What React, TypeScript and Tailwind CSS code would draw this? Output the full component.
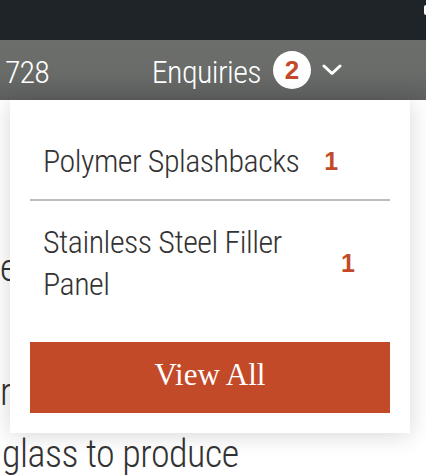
import React from "react";

export default function App() {
  return (
    <div className="relative w-[426px] h-[476px] overflow-hidden bg-white font-['Roboto',sans-serif] font-light tracking-[-0.5px] [font-stretch:75%]">
      {/* top dark bar */}
      <div className="relative h-10 bg-[#1f2428]">
        <div className="absolute right-0 top-[5px] h-[10px] w-[2px] rounded-l-sm bg-white" />
      </div>
      {/* gray bar */}
      <div className="flex h-[60px] items-center bg-gradient-to-b from-[#6c6e6c] via-[#6a6c6a] to-[#5e605f] text-white">
        <span className="pl-[5px] pt-[3px] text-[32px] leading-none tracking-[-1px]">728</span>
        <div className="ml-auto flex items-center pr-[84px]">
          <span className="pt-[3px] text-[32px] leading-none tracking-[-0.6px]">Enquiries</span>
          <span className="ml-3 flex h-[38px] w-[38px] items-center justify-center rounded-full bg-white font-['Liberation_Sans',Arial,sans-serif] text-[26px] font-bold leading-none tracking-normal text-[#c34a28] [font-stretch:100%]">
            2
          </span>
          <svg className="ml-[11px]" width="20" height="12" viewBox="0 0 20 12">
            <polyline points="2,2 10,9.5 18,2" fill="none" stroke="white" strokeWidth="3" strokeLinecap="round" strokeLinejoin="round" />
          </svg>
        </div>
      </div>

      {/* page content behind dropdown */}
      <div className="mt-[137px] text-[38px] leading-[62px] text-[#333]">
        <div className="whitespace-nowrap">e</div>
        <div>&nbsp;</div>
        <div className="whitespace-nowrap">r</div>
        <div className="pl-[2px] whitespace-nowrap">glass to produce</div>
      </div>

      {/* dropdown panel */}
      <div className="absolute left-[10px] top-[100px] w-[400px] bg-white p-5 shadow-[0_2px_22px_rgba(0,0,0,0.16)]">
        <div className="flex items-center border-b-2 border-[#bcbcbc] pb-[17px] pl-[13px] pr-[35px] pt-5">
          <span className="text-[32px] leading-[42px] text-[#333]">Polymer Splashbacks</span>
          <span className="ml-[25px] font-['Liberation_Sans',Arial,sans-serif] text-[25px] font-bold leading-none tracking-normal text-[#c34a28] [font-stretch:100%]">1</span>
        </div>
        <div className="flex items-center pb-5 pl-[13px] pr-[35px] pt-5">
          <span className="min-w-0 flex-1 text-[32px] leading-[42px] text-[#333]">Stainless Steel Filler Panel</span>
          <span className="ml-[25px] font-['Liberation_Sans',Arial,sans-serif] text-[25px] font-bold leading-none tracking-normal text-[#c34a28] [font-stretch:100%]">1</span>
        </div>
        <button className="mt-[17px] flex h-[71px] w-full items-center justify-center bg-[#c34a28] pb-[7px] font-['Liberation_Serif',serif] text-[31px] leading-none tracking-normal text-white [font-stretch:100%]">
          View All
        </button>
      </div>
    </div>
  );
}
